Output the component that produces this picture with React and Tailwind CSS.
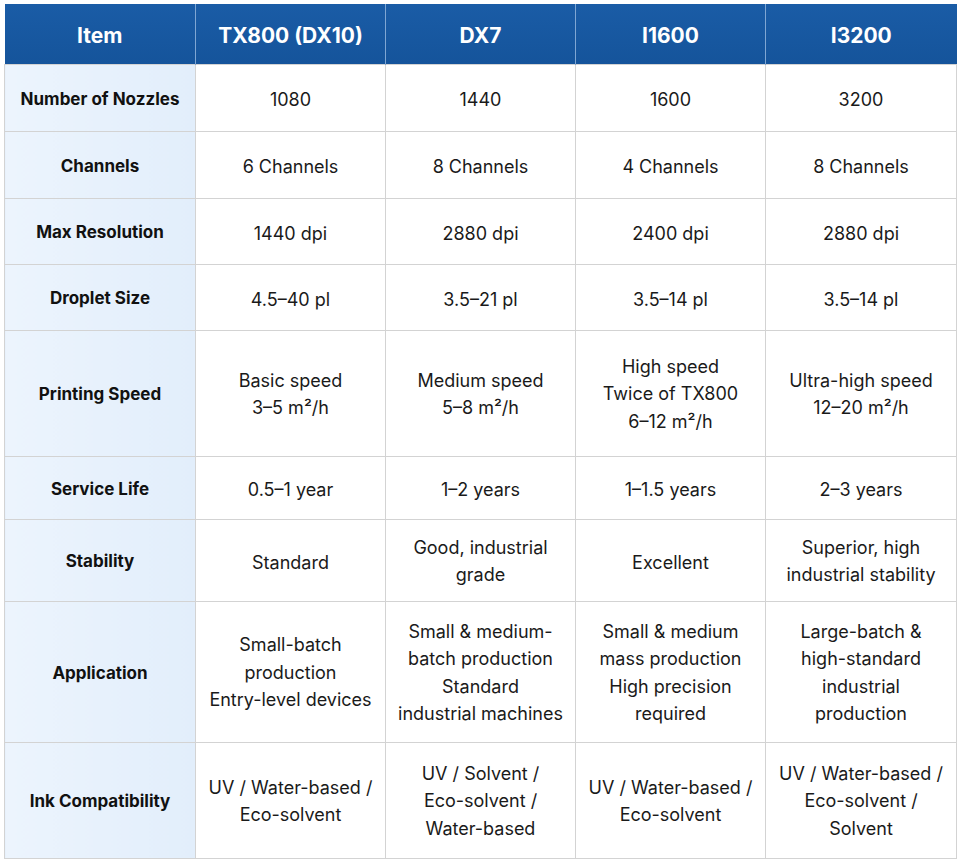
const headers = ['Item', 'TX800 (DX10)', 'DX7', 'I1600', 'I3200']

const rows = [
    { h: 67, label: 'Number of Nozzles', cells: [['1080'], ['1440'], ['1600'], ['3200']] },
    { h: 67, label: 'Channels', cells: [['6 Channels'], ['8 Channels'], ['4 Channels'], ['8 Channels']] },
    { h: 66, label: 'Max Resolution', cells: [['1440 dpi'], ['2880 dpi'], ['2400 dpi'], ['2880 dpi']] },
    { h: 66, label: 'Droplet Size', cells: [['4.5–40 pl'], ['3.5–21 pl'], ['3.5–14 pl'], ['3.5–14 pl']] },
    {
        h: 126, label: 'Printing Speed', cells: [
            ['Basic speed', '3–5 m²/h'],
            ['Medium speed', '5–8 m²/h'],
            ['High speed', 'Twice of TX800', '6–12 m²/h'],
            ['Ultra-high speed', '12–20 m²/h'],
        ]
    },
    { h: 63, label: 'Service Life', cells: [['0.5–1 year'], ['1–2 years'], ['1–1.5 years'], ['2–3 years']] },
    {
        h: 82, label: 'Stability', cells: [
            ['Standard'],
            ['Good, industrial', 'grade'],
            ['Excellent'],
            ['Superior, high', 'industrial stability'],
        ]
    },
    {
        h: 141, label: 'Application', cells: [
            ['Small-batch', 'production', 'Entry-level devices'],
            ['Small & medium-', 'batch production', 'Standard', 'industrial machines'],
            ['Small & medium', 'mass production', 'High precision', 'required'],
            ['Large-batch &', 'high-standard', 'industrial', 'production'],
        ]
    },
    {
        h: 116, label: 'Ink Compatibility', cells: [
            ['UV / Water-based /', 'Eco-solvent'],
            ['UV / Solvent /', 'Eco-solvent /', 'Water-based'],
            ['UV / Water-based /', 'Eco-solvent'],
            ['UV / Water-based /', 'Eco-solvent /', 'Solvent'],
        ]
    },
]

const App = () => {
    return (
        <div className="w-[960px] h-[864px] bg-white p-1 font-['Inter','Liberation_Sans',sans-serif] text-[#1a1a1a]">
            <table className="w-[952px] border-collapse table-fixed">
                <colgroup>
                    <col className="w-[191px]" />
                    <col className="w-[190px]" />
                    <col className="w-[190px]" />
                    <col className="w-[190px]" />
                    <col className="w-[191px]" />
                </colgroup>
                <thead>
                    <tr className="h-[60px] bg-gradient-to-b from-[#1a5ca6] to-[#15549b]">
                        {headers.map((t, i) => (
                            <th key={t} className={`pt-[4px] text-white font-bold text-[21px] text-center align-middle border-[#7fa6d3] ${i > 0 ? 'border-l' : ''}`}>{t}</th>
                        ))}
                    </tr>
                </thead>
                <tbody>
                    {rows.map(r => (
                        <tr key={r.label} style={{ height: r.h }}>
                            <td className="pt-[4px] border border-[#d3d3d3] bg-gradient-to-r from-[#ecf4fd] to-[#e2eefb] text-center align-middle font-bold text-[17px] text-[#111]">{r.label}</td>
                            {r.cells.map((lines, i) => (
                                <td key={i} className={`border border-[#d3d3d3] text-center align-middle text-[18px] leading-[27.5px] ${lines.length === 1 ? 'pt-[5px]' : 'pt-[2px]'}`}>
                                    {lines.map((l, j) => <div key={j}>{l}</div>)}
                                </td>
                            ))}
                        </tr>
                    ))}
                </tbody>
            </table>
        </div>
    )
}

export default App
